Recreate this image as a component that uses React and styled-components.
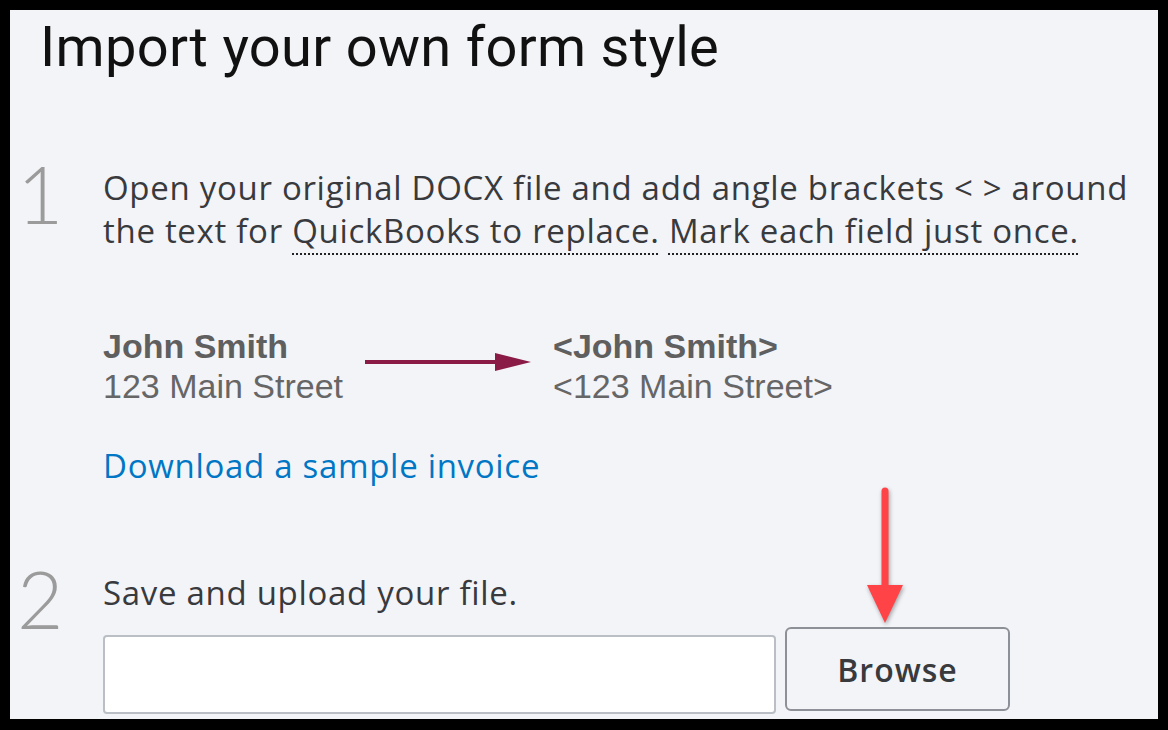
import React from "react";
import styled, { createGlobalStyle } from "styled-components";

const Global = createGlobalStyle`
  html, body {
    margin: 0;
    padding: 0;
    background: #000;
  }
  #root {
    padding: 10px 10px 11px 10px;
  }
`;

const Panel = styled.div`
  width: 1148px;
  height: 709px;
  box-sizing: border-box;
  background: #f3f4f8;
  padding: 2px 0 0 15px;
  overflow: hidden;
  color: #393a3d;
  font-family: "Open Sans", Lato, sans-serif;
`;

const Title = styled.h1`
  margin: 0 0 0 15px;
  font-family: Roboto, "Liberation Sans", sans-serif;
  font-weight: 400;
  font-size: 56px;
  line-height: 70px;
  letter-spacing: 0.3px;
  color: #111;
`;

const Step = styled.div`
  display: grid;
  grid-template-columns: 78px 1fr;
  margin-top: ${(p) => p.top}px;
`;

const Num = styled.div`
  font-family: Lato, sans-serif;
  font-weight: 300;
  font-size: 80px;
  line-height: 80px;
  color: #9b9b9b;
  margin: -13px 0 0 -8px;
`;

const Body = styled.div`
  display: flex;
  flex-direction: column;
`;

const Text = styled.p`
  margin: 0;
  font-size: 33px;
  font-weight: 400;
  line-height: 43px;
  letter-spacing: 0.7px;
  color: #393a3d;
`;

const Dotted = styled.span`
  text-decoration: underline dotted #222;
  text-decoration-thickness: 2px;
  text-underline-offset: 10px;
`;

const Example = styled.div`
  display: flex;
  align-items: center;
  margin-top: 74px;
  font-family: "Liberation Sans", Arial, sans-serif;
  font-size: 34px;
  line-height: 40px;
  color: #666;
`;

const Addr = styled.div`
  display: flex;
  flex-direction: column;
  b {
    font-weight: 700;
    color: #5f5f5f;
  }
`;

const ArrowWrap = styled.div`
  width: 210px;
  display: flex;
  justify-content: center;
  margin-top: -8px;
`;

const Link = styled.a`
  margin-top: 40px;
  font-size: 33px;
  font-weight: 400;
  line-height: 40px;
  letter-spacing: 0.7px;
  color: #0077c5;
  text-decoration: none;
`;

const UploadRow = styled.div`
  display: flex;
  align-items: flex-end;
  gap: 9px;
  margin-top: 13px;
`;

const Input = styled.div`
  width: 673px;
  height: 79px;
  box-sizing: border-box;
  background: #fff;
  border: 2px solid #babec5;
  border-radius: 4px;
  margin-bottom: -3px;
`;

const BrowseCol = styled.div`
  position: relative;
`;

const Browse = styled.button`
  width: 225px;
  height: 84px;
  box-sizing: border-box;
  background: #f3f4f8;
  border: 2px solid #8d9096;
  border-radius: 6px;
  font-family: "Open Sans", sans-serif;
  font-weight: 600;
  font-size: 32px;
  letter-spacing: 1px;
  color: #393a3d;
`;

const Pointer = styled.svg`
  position: absolute;
  left: 80px;
  bottom: 84px;
  filter: drop-shadow(1px 2px 2px rgba(0, 0, 0, 0.35));
`;

export default function App() {
  return (
    <>
      <Global />
      <Panel>
        <Title>Import your own form style</Title>
        <Step top={84}>
          <Num>1</Num>
          <Body>
            <Text>
              Open your original DOCX file and add angle brackets &lt; &gt; around
              the text for <Dotted>QuickBooks to replace.</Dotted>{" "}
              <Dotted>Mark each field just once.</Dotted>
            </Text>
            <Example>
              <Addr>
                <b>John Smith</b>
                <span>123 Main Street</span>
              </Addr>
              <ArrowWrap>
                <svg width="166" height="20" viewBox="0 0 166 20">
                  <line x1="0" y1="10" x2="140" y2="10" stroke="#8a1a46" strokeWidth="4" />
                  <polygon points="130,1 166,10 130,19" fill="#8a1a46" />
                </svg>
              </ArrowWrap>
              <Addr>
                <b>&lt;John Smith&gt;</b>
                <span>&lt;123 Main Street&gt;</span>
              </Addr>
            </Example>
            <Link href="#">Download a sample invoice</Link>
          </Body>
        </Step>
        <Step top={85}>
          <Num>2</Num>
          <Body>
            <Text>Save and upload your file.</Text>
            <UploadRow>
              <Input />
              <BrowseCol>
                <Pointer width="40" height="140" viewBox="0 0 40 140">
                  <line x1="20" y1="4" x2="20" y2="100" stroke="#ff4347" strokeWidth="7" strokeLinecap="round" />
                  <polygon points="2,98 38,98 20,136" fill="#ff4347" />
                </Pointer>
                <Browse>Browse</Browse>
              </BrowseCol>
            </UploadRow>
          </Body>
        </Step>
      </Panel>
    </>
  );
}
